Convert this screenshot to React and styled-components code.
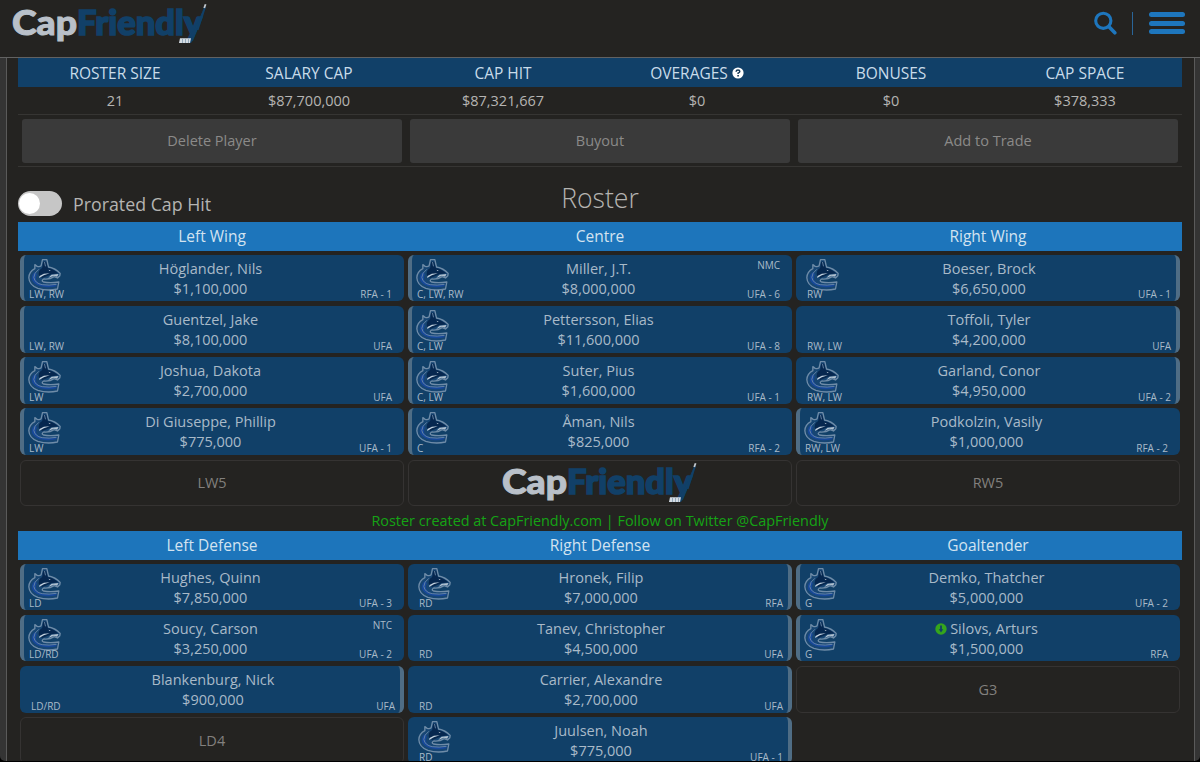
import styled, { createGlobalStyle } from "styled-components";

const GlobalStyle = createGlobalStyle`
  * {
    box-sizing: border-box;
  }
  body {
    margin: 0;
    background: #000;
    font-family: "Open Sans", "Noto Sans", sans-serif;
    font-size: 14.5px;
    color: #b5b4b2;
  }
`;

const Page = styled.div`
  height: 761px;
  overflow: hidden;
  background: #343434;
  border-radius: 0 0 5px 5px;
`;
const Header = styled.header`
  display: flex;
  align-items: flex-start;
  justify-content: space-between;
  height: 58px;
  padding: 0 15px 0 10px;
  background: #242321;
  border-bottom: 1px solid #626262;
`;
const HeaderLogo = styled.div`
  height: 50px;
`;
const HeaderActions = styled.div`
  display: flex;
  align-items: flex-start;
  padding-top: 11px;
`;
const Divider = styled.span`
  width: 1px;
  height: 23px;
  margin: 1px 16px 0 15px;
  background: #2a6598;
`;
const Burger = styled.div`
  display: flex;
  flex-direction: column;
  gap: 3.5px;
  width: 36px;
  padding-top: 1px;
  span {
    height: 5px;
    border-radius: 2.5px;
    background: #1e76bd;
  }
`;
const Content = styled.main`
  height: 704px;
  margin: 0 5px 0 6px;
  padding: 0 12px 0 11px;
  background: #242321;
  border-left: 1px solid #5a5a5a;
  border-right: 1px solid #5a5a5a;
`;
const StatsGrid = styled.div`
  display: grid;
  grid-template-columns: repeat(6, 1fr);
  text-align: center;
`;
const StatHead = styled.div`
  display: flex;
  align-items: center;
  justify-content: center;
  gap: 4px;
  height: 29px;
  background: #114068;
  color: #c9dcea;
  font-size: 15.5px;
`;
const StatValue = styled.div`
  height: 28px;
  line-height: 27px;
  border-bottom: 1px solid #363533;
`;
const Actions = styled.div`
  display: grid;
  grid-template-columns: repeat(3, 1fr);
  gap: 8px;
  height: 52px;
  padding: 4px 4px;
  border-bottom: 1px solid #363533;
`;
const ActionButton = styled.button`
  height: 44px;
  padding: 0 0 2px;
  border: 0;
  border-radius: 3px;
  background: #3a3a3a;
  color: #8b8a89;
  font: inherit;
`;
const TitleRow = styled.div`
  display: grid;
  grid-template-columns: 1fr auto 1fr;
  height: 55px;
  h1 {
    margin: 12px 0 0;
    font-size: 26.6px;
    font-weight: 300;
    line-height: 38px;
  }
`;
const ToggleLabel = styled.label`
  display: flex;
  align-items: center;
  gap: 11px;
  height: 25px;
  margin-top: 24px;
  font-size: 17.8px;
`;
const Toggle = styled.span`
  display: flex;
  align-items: center;
  width: 44px;
  height: 25px;
  padding: 0 1px;
  border-radius: 13px;
  background: #c6c6c6;
  &::before {
    content: "";
    width: 21px;
    height: 21px;
    border-radius: 50%;
    background: #fff;
  }
`;
const ColumnHeads = styled.div`
  display: grid;
  grid-template-columns: repeat(3, 1fr);
  height: 29px;
  font-size: 15.5px;
  line-height: 28px;
  text-align: center;
  background: #1d75bb;
  color: #d3e3f0;
`;
const Lines = styled.div`
  display: grid;
  grid-template-columns: repeat(3, 1fr);
  grid-auto-rows: 46.4px;
  gap: 4.76px 4px;
  padding: 4px 2px 0;
`;
const Card = styled.div`
  display: grid;
  grid-template-columns: 80px 1fr 80px;
  padding: ${({ $right }) => ($right ? "0 5px 0 11px" : "0 12px 0 5px")};
  border-radius: 6px;
  background: #114068;
  border-left: ${({ $right }) => ($right ? "0" : "4px solid #4f6d85")};
  border-right: ${({ $right }) => ($right ? "4px solid #4f6d85" : "0")};
  color: #a9bac8;
`;
const CardSide = styled.div`
  display: flex;
  flex-direction: column;
  justify-content: flex-end;
  font-size: 10px;
  line-height: 14px;
  svg {
    flex: none;
    margin: 0 0 -3.5px -1px;
  }
`;
const CardTerms = styled.div`
  display: flex;
  flex-direction: column;
  justify-content: flex-end;
  padding-top: 3px;
  font-size: 10px;
  line-height: 14px;
  text-align: right;
  span:first-child:not(:last-child) {
    margin-bottom: auto;
  }
`;
const CardBody = styled.div`
  padding-top: 4px;
  line-height: 20px;
  text-align: center;
  white-space: nowrap;
  p {
    margin: 0;
  }
  svg {
    margin-right: 3px;
    vertical-align: -1px;
  }
`;
const EmptySlot = styled.div`
  display: flex;
  align-items: center;
  justify-content: center;
  border: 1px solid #353332;
  border-radius: 6px;
  color: #82807e;
`;
const Credit = styled.p`
  height: 24.96px;
  margin: 0;
  padding-top: 3px;
  font-size: 14.4px;
  line-height: 23px;
  text-align: center;
  color: #15a315;
`;

const forwards = [
  { name: "Höglander, Nils", hit: "$1,100,000", pos: "LW, RW", status: "RFA - 1", logo: true },
  { name: "Miller, J.T.", hit: "$8,000,000", pos: "C, LW, RW", status: "UFA - 6", clause: "NMC", logo: true },
  { name: "Boeser, Brock", hit: "$6,650,000", pos: "RW", status: "UFA - 1", logo: true, right: true },
  { name: "Guentzel, Jake", hit: "$8,100,000", pos: "LW, RW", status: "UFA" },
  { name: "Pettersson, Elias", hit: "$11,600,000", pos: "C, LW", status: "UFA - 8", logo: true },
  { name: "Toffoli, Tyler", hit: "$4,200,000", pos: "RW, LW", status: "UFA", right: true },
  { name: "Joshua, Dakota", hit: "$2,700,000", pos: "LW", status: "UFA", logo: true },
  { name: "Suter, Pius", hit: "$1,600,000", pos: "C, LW", status: "UFA - 1", logo: true },
  { name: "Garland, Conor", hit: "$4,950,000", pos: "RW, LW", status: "UFA - 2", logo: true, right: true },
  { name: "Di Giuseppe, Phillip", hit: "$775,000", pos: "LW", status: "UFA - 1", logo: true },
  { name: "Åman, Nils", hit: "$825,000", pos: "C", status: "RFA - 2", logo: true },
  { name: "Podkolzin, Vasily", hit: "$1,000,000", pos: "RW, LW", status: "RFA - 2", logo: true },
  { empty: "LW5" },
  { brand: true },
  { empty: "RW5" },
];

const defense = [
  { name: "Hughes, Quinn", hit: "$7,850,000", pos: "LD", status: "UFA - 3", logo: true },
  { name: "Hronek, Filip", hit: "$7,000,000", pos: "RD", status: "RFA", logo: true, right: true },
  { name: "Demko, Thatcher", hit: "$5,000,000", pos: "G", status: "UFA - 2", logo: true },
  { name: "Soucy, Carson", hit: "$3,250,000", pos: "LD/RD", status: "UFA - 2", clause: "NTC", logo: true },
  { name: "Tanev, Christopher", hit: "$4,500,000", pos: "RD", status: "UFA", right: true },
  { name: "Silovs, Arturs", hit: "$1,500,000", pos: "G", status: "RFA", logo: true, down: true },
  { name: "Blankenburg, Nick", hit: "$900,000", pos: "LD/RD", status: "UFA", right: true },
  { name: "Carrier, Alexandre", hit: "$2,700,000", pos: "RD", status: "UFA", right: true },
  { empty: "G3" },
  { empty: "LD4" },
  { name: "Juulsen, Noah", hit: "$775,000", pos: "RD", status: "UFA - 1", logo: true, right: true },
];

const stats = [
  ["ROSTER SIZE", "21"],
  ["SALARY CAP", "$87,700,000"],
  ["CAP HIT", "$87,321,667"],
  ["OVERAGES", "$0"],
  ["BONUSES", "$0"],
  ["CAP SPACE", "$378,333"],
];

function BrandLogo() {
  return (
    <svg width="200" height="48" viewBox="0 0 200 48">
      <g fontFamily="Lato, sans-serif" fontWeight="900" fontSize="33.5" strokeWidth="1">
        <text x="2" y="35" textLength="65" lengthAdjust="spacingAndGlyphs" fill="#b9c0c9" stroke="#b9c0c9">
          Cap
        </text>
        <text x="67" y="35" textLength="125" lengthAdjust="spacingAndGlyphs" fill="#114068" stroke="#114068" strokeWidth="1.6">
          Friendly
        </text>
      </g>
      <path d="M193.5 9 L188 28 L184 37 L181 43 H176 L185 28 Z" fill="#114068" />
      <path d="M195 7 L187.5 30" stroke="#114068" strokeWidth="2" />
      <path d="M194.2 8 L195.6 4.3" stroke="#c3c9d0" strokeWidth="1.8" />
      <path d="M170 38.3 H181 L180 43 H169 Z" fill="#d5dce3" />
      <path d="M172.5 39 V43 M175.5 39 V43 M178.5 39 V43" stroke="#7892a8" strokeWidth="0.7" />
    </svg>
  );
}

function TeamLogo() {
  return (
    <svg width="33" height="32" viewBox="0 0 98 96">
      <path
        d="M43 2 H56 L61 24 Q82 28 96 43 L95 50 L88 57 L78 53 Q64 62 47 60 Q38 65 46 69 Q66 73 92 69 L88 90 Q57 97 29 88 Q3 78 2 56 Q3 38 20 29 L20 17 L27 22 Q35 24 39 20 Z"
        fill="#174673"
        stroke="#6f8ca8"
        strokeWidth="4"
        strokeLinejoin="round"
      />
      <path d="M45 8 H54 L59 27 Q78 31 90 43 L70 46 L43 57 L33 52 Q28 34 42 27 Z" fill="#06274f" />
      <path d="M21 38 Q6 50 13 66 Q22 81 50 84 Q67 86 84 82 L86 76 Q57 81 36 74 Q17 65 26 46" fill="#17489a" />
      <path d="M32 31 Q17 42 17 55 Q20 73 42 77 Q62 80 85 76" fill="none" stroke="#6383a6" strokeWidth="3" />
      <path d="M34 51 L47 44 L65 43 L47 49 L33 57 Z" fill="#c2d0dd" />
      <path d="M70 47 L91 45 L87 53 L77 50 L60 57 Z" fill="#b2c2d1" />
      <path d="M61 32 L68 35 L64 36 Z" fill="#d8e2ea" />
      <path d="M49 9 L52 22" fill="none" stroke="#5f7fa0" strokeWidth="3" />
    </svg>
  );
}

function SearchIcon() {
  return (
    <svg width="24" height="24" viewBox="0 0 24 24" fill="none" stroke="#1e76bd">
      <circle cx="10.3" cy="9.8" r="7.6" strokeWidth="3.1" />
      <path d="M16 15.8 L21.8 21.8" strokeWidth="3.6" strokeLinecap="round" />
    </svg>
  );
}

function HelpIcon() {
  return (
    <svg width="12" height="12" viewBox="0 0 12 12">
      <circle cx="6" cy="6" r="5.6" fill="#fff" />
      <path d="M4.1 4.7 Q4.2 3.1 6 3.1 Q7.8 3.1 7.8 4.6 Q7.8 5.6 6.1 6.1 V7" fill="none" stroke="#153754" strokeWidth="1.5" />
      <path d="M5.3 8 H6.9 V9.4 H5.3 Z" fill="#153754" />
    </svg>
  );
}

function DownIcon() {
  return (
    <svg width="12" height="12" viewBox="0 0 12 12">
      <circle cx="6" cy="6" r="5.7" fill="#35a51c" />
      <path d="M5.1 2.5 H6.9 V6.2 H8.2 L6 9.5 L3.8 6.2 H5.1 Z" fill="#114068" />
    </svg>
  );
}

function Slot({ slot }) {
  if (slot.brand) {
    return (
      <EmptySlot>
        <BrandLogo />
      </EmptySlot>
    );
  }
  if (slot.empty) {
    return <EmptySlot>{slot.empty}</EmptySlot>;
  }
  return (
    <Card $right={slot.right}>
      <CardSide>
        {slot.logo && <TeamLogo />}
        <span>{slot.pos}</span>
      </CardSide>
      <CardBody>
        <p>
          {slot.down && <DownIcon />}
          {slot.name}
        </p>
        <p>{slot.hit}</p>
      </CardBody>
      <CardTerms>
        {slot.clause && <span>{slot.clause}</span>}
        <span>{slot.status}</span>
      </CardTerms>
    </Card>
  );
}

function RosterSection({ heads, slots }) {
  return (
    <section>
      <ColumnHeads>
        {heads.map((head) => (
          <div key={head}>{head}</div>
        ))}
      </ColumnHeads>
      <Lines>
        {slots.map((slot, i) => (
          <Slot key={i} slot={slot} />
        ))}
      </Lines>
    </section>
  );
}

export default function App() {
  return (
    <>
      <GlobalStyle />
      <Page>
        <Header>
          <HeaderLogo>
            <BrandLogo />
          </HeaderLogo>
          <HeaderActions>
            <SearchIcon />
            <Divider />
            <Burger>
              <span />
              <span />
              <span />
            </Burger>
          </HeaderActions>
        </Header>
        <Content>
          <StatsGrid>
            {stats.map(([label]) => (
              <StatHead key={label}>
                {label}
                {label === "OVERAGES" && <HelpIcon />}
              </StatHead>
            ))}
            {stats.map(([label, value]) => (
              <StatValue key={label}>{value}</StatValue>
            ))}
          </StatsGrid>
          <Actions>
            <ActionButton>Delete Player</ActionButton>
            <ActionButton>Buyout</ActionButton>
            <ActionButton>Add to Trade</ActionButton>
          </Actions>
          <TitleRow>
            <ToggleLabel>
              <Toggle />
              Prorated Cap Hit
            </ToggleLabel>
            <h1>Roster</h1>
          </TitleRow>
          <RosterSection heads={["Left Wing", "Centre", "Right Wing"]} slots={forwards} />
          <Credit>Roster created at CapFriendly.com | Follow on Twitter @CapFriendly</Credit>
          <RosterSection heads={["Left Defense", "Right Defense", "Goaltender"]} slots={defense} />
        </Content>
      </Page>
    </>
  );
}
